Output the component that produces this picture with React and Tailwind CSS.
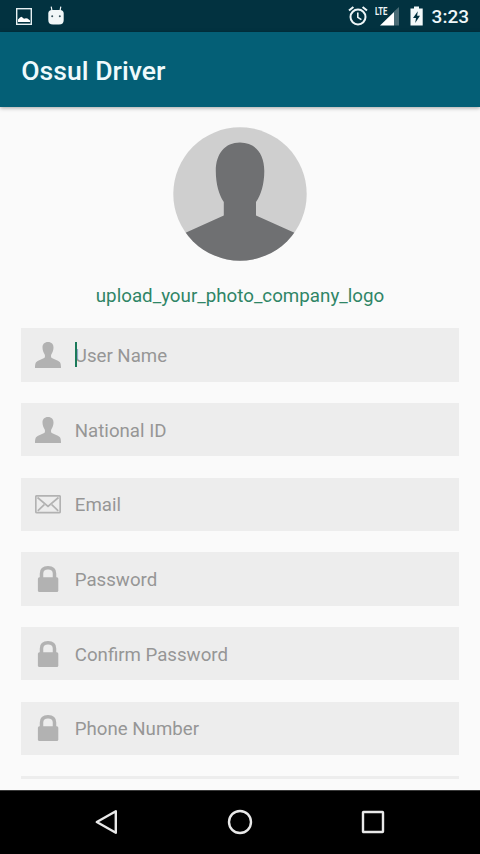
import React, { useState } from "react";

const UserIcon = () => (
  <svg className="w-[26px] h-[26px]" viewBox="0 0 26 26" fill="#b2b2b2">
    <path d="M13 0C9.4 0 7.4 2.2 7.5 5.8C7.6 8.8 8.6 10.8 9.7 12.4C10.2 13.6 10.1 15.4 9.2 16.1C7.6 17.3 3.2 18.3 1.3 19.9C0.2 21 0 23.4 0 26H26C26 23.4 25.8 21 24.7 19.9C22.8 18.3 18.4 17.3 16.8 16.1C15.9 15.4 15.8 13.6 16.3 12.4C17.4 10.8 18.4 8.8 18.5 5.8C18.6 2.2 16.6 0 13 0Z" />
  </svg>
);

const MailIcon = () => (
  <svg
    className="w-[26px] h-[26px]"
    viewBox="0 0 26 26"
    fill="none"
    stroke="#b2b2b2"
    strokeWidth="1.7"
  >
    <rect x="0.8" y="4.8" width="24.4" height="16.9" rx="1" />
    <path d="M2.5 6.5L13 15.3L23.5 6.5M2.8 19.8L9.3 13.6M23.2 19.8L16.7 13.6" />
  </svg>
);

const LockIcon = () => (
  <svg className="w-[26px] h-[26px]" viewBox="0 0 26 26">
    <path
      d="M6.5 13V7.6C6.5 3.7 8.6 1.8 13 1.8S19.5 3.7 19.5 7.6V13"
      fill="none"
      stroke="#b2b2b2"
      strokeWidth="3.5"
    />
    <rect x="2.9" y="11.2" width="20.4" height="14.8" rx="1.5" fill="#b2b2b2" />
  </svg>
);

const fields = [
  { name: "userName", label: "User Name", type: "text", icon: UserIcon },
  { name: "nationalId", label: "National ID", type: "text", icon: UserIcon },
  { name: "email", label: "Email", type: "email", icon: MailIcon },
  { name: "password", label: "Password", type: "password", icon: LockIcon },
  { name: "confirm", label: "Confirm Password", type: "password", icon: LockIcon },
  { name: "phone", label: "Phone Number", type: "tel", icon: LockIcon },
];

const StatusBar = () => (
  <div className="h-8 shrink-0 bg-[#023240] flex items-center justify-between pl-4 pr-[11px]">
    <div className="flex items-center gap-4">
      <svg className="w-4 h-[17px]" viewBox="0 0 16 17">
        <rect x="0.7" y="0.7" width="14.6" height="15.6" fill="none" stroke="#e6f0f3" strokeWidth="1.4" />
        <path d="M2 14V11.5L4 9.5L5.5 8.8L8 10.8L10 10.2L11.5 10.5L14 12.5V14Z" fill="#fff" />
      </svg>
      <svg className="w-4 h-[19px] mb-[2px]" viewBox="0 0 16 19">
        <path d="M4 5L3.2 0.7M12 5L12.8 0.7" stroke="#f1f7f8" strokeWidth="1.2" />
        <path d="M0.3 7.5Q0.3 4 4 4H12Q15.7 4 15.7 7.5V14Q15.7 18.5 11 18.5H5Q0.3 18.5 0.3 14Z" fill="#f1f7f8" />
        <circle cx="4.2" cy="10.2" r="1" fill="#36525c" />
        <circle cx="11.8" cy="10.2" r="1" fill="#36525c" />
      </svg>
    </div>
    <div className="flex items-center">
      <svg className="w-5 h-5" viewBox="0 0 20 20" fill="none" stroke="#eef6f8">
        <circle cx="10" cy="11" r="7.5" strokeWidth="2" />
        <path d="M1 4.6L5.4 1M19 4.6L14.6 1" strokeWidth="2" />
        <path d="M9.8 6.5V11.4L13.4 13.6" strokeWidth="1.6" />
      </svg>
      <div className="relative ml-[7px] w-[25px] h-5">
        <span className="absolute left-0 top-0 text-[11px] leading-[11px] font-bold text-[#eef6f8] origin-left scale-x-[0.7]">
          LTE
        </span>
        <svg className="w-[25px] h-5" viewBox="0 0 25 20">
          <path d="M19 5.5L24 1V19.5H19Z" fill="#4a6b75" />
          <path d="M5 19.5L19 6V19.5Z" fill="#fff" />
        </svg>
      </div>
      <svg className="ml-[10px] w-[13px] h-5" viewBox="0 0 13 20">
        <path d="M0.5 2.5H4V0.5H9V2.5H12.7V19.5H0.5Z" fill="#f4fafb" />
        <path d="M7.8 5.2L3 12H6L5.2 17L10 9.8H7.1Z" fill="#023240" />
      </svg>
      <span className="ml-[9px] pt-px text-[19px] leading-8 font-medium text-[#f0f7f9]">3:23</span>
    </div>
  </div>
);

const Avatar = () => (
  <svg className="w-[134px] h-[134px]" viewBox="0 0 134 134">
    <defs>
      <clipPath id="avatar">
        <circle cx="67" cy="67" r="66.7" />
      </clipPath>
    </defs>
    <g clipPath="url(#avatar)">
      <rect width="134" height="134" fill="#cfcfcf" />
      <path
        d="M67 15.5C52 15.5 42.8 26.5 42.8 44C42.8 57 46 68 50.8 75V88.5L12 106V134H122V106L83 88.5V75C88 68 91.3 57 91.3 44C91.3 26.5 82 15.5 67 15.5Z"
        fill="#6f7072"
      />
    </g>
  </svg>
);

const NavBar = () => (
  <div className="h-16 shrink-0 bg-black border-t border-[#3a3a3a] flex items-center justify-center gap-[108px] pb-[2px]">
    <svg className="w-6 h-[26px]" viewBox="0 0 24 26" fill="none" stroke="#e8e8e8" strokeWidth="2.4">
      <path d="M20.8 2.2V23.8L1.8 13Z" strokeLinejoin="round" />
    </svg>
    <svg className="w-[26px] h-[26px]" viewBox="0 0 26 26" fill="none" stroke="#e8e8e8" strokeWidth="2.4">
      <circle cx="13" cy="13" r="11" />
    </svg>
    <svg className="w-6 h-6" viewBox="0 0 24 24" fill="none" stroke="#e8e8e8" strokeWidth="2.4">
      <rect x="2" y="2" width="20" height="20" rx="0.5" />
    </svg>
  </div>
);

const App = () => {
  const [formData, setFormData] = useState({});

  const handleInputChange = (e) => {
    const { name, value } = e.target;
    setFormData({
      ...formData,
      [name]: value,
    });
  };

  return (
    <div className="w-[480px] h-[854px] flex flex-col overflow-hidden bg-[#fafafa] font-[Roboto,sans-serif]">
      <StatusBar />
      <header className="relative h-[74.67px] shrink-0 bg-[#045f76] px-[21.3px] pt-[3px] flex items-center shadow-[0_1px_4px_rgba(0,0,0,0.35)]">
        <h1 className="text-[26.6px] font-medium text-[#f0fafc]">Ossul Driver</h1>
      </header>

      <main className="h-[672.3px] shrink-0 overflow-hidden px-[21.3px] pt-5 flex flex-col">
        <div className="shrink-0 flex flex-col items-center">
          <Avatar />
          <p className="mt-[21px] text-[18.75px] leading-[28px] text-[#2f8566]">
            upload_your_photo_company_logo
          </p>
        </div>

        <form className="mt-[18.7px] flex flex-col gap-[21.33px]">
          {fields.map(({ name, label, type, icon: Icon }, i) => (
            <label
              key={name}
              className="relative h-[53.33px] shrink-0 bg-[#ededed] flex items-center pl-[13.5px]"
            >
              <Icon />
              <input
                className="ml-[14px] pt-[2px] flex-1 h-full bg-transparent outline-none text-[18.67px] text-gray-700 placeholder:text-[#969696]"
                type={type}
                name={name}
                placeholder={label}
                value={formData[name] || ""}
                onChange={handleInputChange}
              />
              {i === 0 && (
                <span className="absolute left-[53.5px] top-[14px] w-[2.5px] h-[25px] bg-[#1b7a5a]" />
              )}
            </label>
          ))}
          <div className="h-[53.33px] shrink-0 bg-[#ededed]" />
        </form>
      </main>

      <div className="flex-1" />
      <NavBar />
    </div>
  );
};

export default App;
